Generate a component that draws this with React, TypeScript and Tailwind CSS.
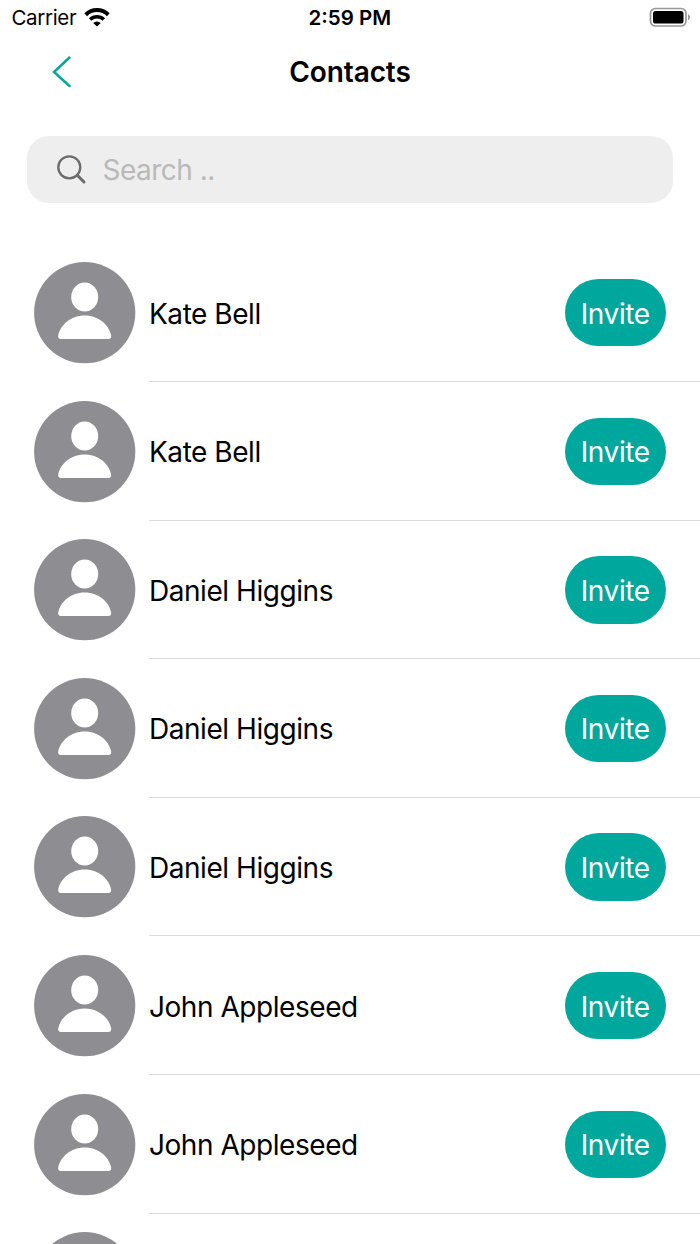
import { useState } from 'react';

const contacts = [
  { id: 1, name: 'Kate Bell' },
  { id: 2, name: 'Kate Bell' },
  { id: 3, name: 'Daniel Higgins' },
  { id: 4, name: 'Daniel Higgins' },
  { id: 5, name: 'Daniel Higgins' },
  { id: 6, name: 'John Appleseed' },
  { id: 7, name: 'John Appleseed' },
];

const StatusBar = () => (
  <div className="grid h-9 shrink-0 grid-cols-3 items-center pl-[11.5px] pr-[9px] text-black">
    <div className="flex items-center gap-[7.5px]">
      <span className="text-[20.5px] leading-9 tracking-[-0.35px]">Carrier</span>
      <svg className="mb-[3px]" width="26" height="20" viewBox="0 0 26 20" fill="none" stroke="currentColor" strokeWidth="4">
        <path d="M1.7 7.7a16.200 16.200 0 0 1 22.600 0" />
        <path d="M6.200 12.500a9.700 9.700 0 0 1 13.600 0" strokeWidth="3.600" />
        <path d="M13 19.600 9.200 16a5.400 5.400 0 0 1 7.600 0Z" fill="currentColor" stroke="none" />
      </svg>
    </div>
    <span className="pr-[3px] text-center text-[20.5px] font-semibold leading-9">2:59 PM</span>
    <svg className="justify-self-end" width="42" height="22" viewBox="0 0 42 22">
      <rect x="1.5" y="1.5" width="35.5" height="17.5" rx="5" fill="none" stroke="#979797" strokeWidth="1.7" />
      <rect x="4" y="4" width="30.5" height="12.5" rx="2.6" fill="#000" />
      <path d="M39 7.2c2.6 1 2.6 5.1 0 6.1Z" fill="#979797" />
    </svg>
  </div>
);

const Header = () => (
  <header className="grid h-[72px] shrink-0 grid-cols-3 items-center">
    <button className="ml-[52px] w-5" aria-label="Back">
      <svg width="20" height="32" viewBox="0 0 20 32" fill="none" stroke="#00a79d" strokeWidth="2.5" strokeLinecap="round">
        <path d="M17.5 1.5 2 16l15.500 14" />
      </svg>
    </button>
    <h1 className="text-center text-[28px] font-semibold tracking-[-0.1px]">Contacts</h1>
  </header>
);

const Avatar = () => (
  <svg className="shrink-0" width="102" height="102" viewBox="0 0 102 102">
    <circle cx="50.700" cy="50.700" r="50.6" fill="#8e8d92" />
    <ellipse cx="50.700" cy="35.100" rx="13.500" ry="14.500" fill="#fff" />
    <path d="M27.200 77C24.600 77 23.900 75.500 24.300 73.200 25.900 63.900 36.100 53.500 50.700 53.500S75.500 63.900 77.100 73.200C77.500 75.500 76.800 77 74.200 77Z" fill="#fff" />
  </svg>
);

const ContactRow = ({ name }: { name: string }) => (
  <li className="flex h-[138.6px] shrink-0 pl-[34px]">
    <div className="pt-[18.7px]">
      <Avatar />
    </div>
    <div className="ml-[13px] flex flex-1 items-center justify-between border-b border-[#dcdcdd] pr-[34px] pt-px">
      <span className="whitespace-nowrap pt-[2px] text-[28px] leading-9 tracking-[-0.45px] text-black">{name}</span>
      <button className="h-[67.5px] w-[101.5px] rounded-full bg-[#00a79d] pt-[2px] text-[28px] tracking-[-0.4px] text-white">
        Invite
      </button>
    </div>
  </li>
);

const App = () => {
  const [query, setQuery] = useState('');

  return (
    <div className="flex h-[1244px] w-[700px] flex-col overflow-hidden bg-white font-['Inter',sans-serif]">
      <StatusBar />
      <Header />

      {/* Search */}
      <label className="mx-[27px] mt-[27.500px] flex h-[67.5px] shrink-0 items-center rounded-[22px] bg-[#eeeeee] pl-[30px]">
        <svg className="mt-px" width="30" height="30" viewBox="0 0 30 30" fill="none" stroke="#6b6b6b" strokeWidth="2.3" strokeLinecap="round">
          <circle cx="12.300" cy="12.300" r="11" />
          <path d="m20.300 20.300 6.700 6.700" strokeWidth="3" />
        </svg>
        <input
          className="ml-[15.5px] w-[500px] bg-transparent pt-[2px] text-[28px] tracking-[-0.5px] text-black outline-none placeholder:text-[#b9b9b9]"
          placeholder="Search .."
          value={query}
          onChange={(e) => setQuery(e.target.value)}
        />
      </label>

      <ul className="mt-[40.4px] flex flex-col">
        {contacts.map((contact) => (
          <ContactRow key={contact.id} name={contact.name} />
        ))}
        {/* Next row peeking in at the bottom of the screen */}
        <li className="shrink-0 pl-[34px] pt-[18.7px]">
          <Avatar />
        </li>
      </ul>
    </div>
  );
};

export default App;
